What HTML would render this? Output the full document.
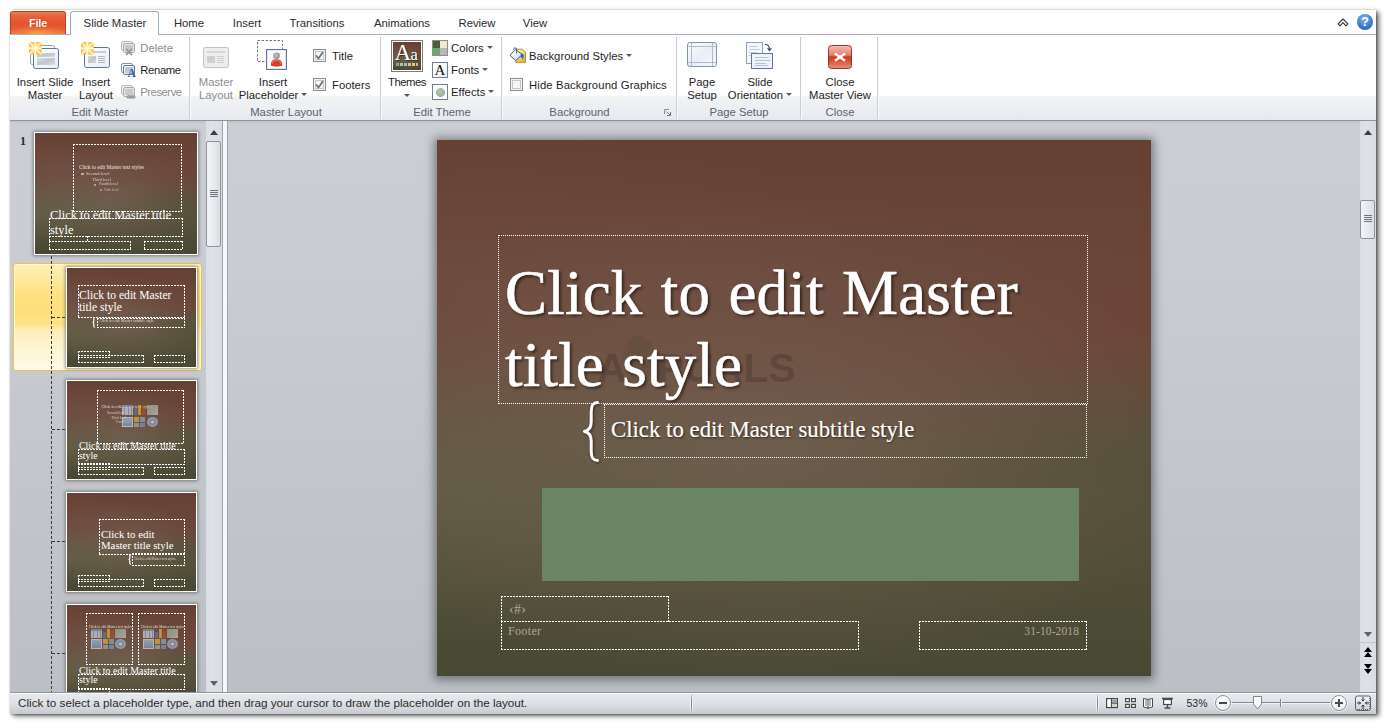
<!DOCTYPE html>
<html>
<head>
<meta charset="utf-8">
<title>PowerPoint Slide Master</title>
<style>
*{box-sizing:border-box;margin:0;padding:0}
html,body{width:1387px;height:725px;overflow:hidden;background:#fff}
body{font-family:"Liberation Sans",sans-serif;font-size:11.3px;color:#1e1e1e;position:relative}
.abs{position:absolute}
#app{position:absolute;left:10px;top:10px;width:1366px;height:704px;background:#fff;box-shadow:3px 2px 5px rgba(0,0,0,.58),1px 1px 2px rgba(0,0,0,.25),0 0 1px rgba(0,0,0,.18);overflow:hidden}
/* everything inside #app is positioned in page coords minus (10,10) via #o */
#o{position:absolute;left:-10px;top:-10px;width:1387px;height:725px}
/* tabs */
#tabrow{position:absolute;left:10px;top:10px;width:1366px;height:24px;background:#fff}
.tab{position:absolute;top:15px;height:16px;line-height:16px;font-size:11.3px;color:#2b2b2b;white-space:nowrap;text-align:center}
#filetab{position:absolute;left:10px;top:11px;width:56px;height:23px;border-radius:3px 3px 0 0;border:1px solid #c6411b;border-bottom:none;background:radial-gradient(ellipse 55% 38% at 50% 100%,rgba(248,170,50,.95) 0,rgba(245,140,60,.5) 55%,rgba(240,120,60,0) 100%),linear-gradient(#ef7a4c 0%,#e7633c 18%,#e4522d 55%,#e6603a 80%,#ee7a3c 100%);color:#fff;font-weight:bold;font-size:10.8px;letter-spacing:-.1px;text-align:center;line-height:22px;text-shadow:0 0 1px rgba(120,30,0,.6)}
#acttab{position:absolute;left:70px;top:11px;width:89px;height:24px;border:1px solid #a5acb5;border-bottom:none;border-radius:3px 3px 0 0;background:#fff;z-index:3}
/* ribbon */
#ribbon{position:absolute;left:10px;top:34px;width:1366px;height:87px;border-top:1px solid #a9b0ba;border-bottom:1px solid #8f949b;background:linear-gradient(#ffffff 0px,#ffffff 60px,#f1f2f4 62px,#eceef1 75px,#e6e8ec 85px)}
.gsep{position:absolute;top:37px;width:2px;height:82px;background:linear-gradient(90deg,#c9cdd3 0,#c9cdd3 1px,#fbfbfc 1px)}
.glabel{position:absolute;top:105px;height:14px;line-height:14px;font-size:11.3px;color:#5a6275;text-align:center;white-space:nowrap}
.rt{position:absolute;white-space:nowrap;line-height:13px;font-size:11.3px;color:#1e1e1e;text-align:center}
.dis{color:#8d8d8d}
.arr{display:inline-block;width:0;height:0;border-left:3px solid transparent;border-right:3px solid transparent;border-top:3px solid #5a5a5a;vertical-align:middle;margin-left:3px;position:relative;top:-2px}
.cb{position:absolute;width:13px;height:13px;border:1px solid #8e8f8f;background:#f4f4f4;box-shadow:inset 0 0 0 1px #f4f4f4,inset 0 0 0 2px #c3c7cc}
/* workspace */
#work{position:absolute;left:10px;top:121px;width:1366px;height:572px;background:linear-gradient(#bfc3c9 0,#cbcfd4 3px,#c9cdd2 150px,#c1c5ca 400px,#bcc0c5 572px)}
#status{position:absolute;left:10px;top:692px;width:1366px;height:22px;border-top:1px solid #8f959d;background:linear-gradient(#fafbfc 0,#fafbfc 1px,#e6e9ec 1px,#dde0e5 50%,#c7cbd1 100%)}
.ssep{position:absolute;top:694px;width:3px;height:19px;background:linear-gradient(90deg,rgba(255,255,255,.7) 0,rgba(255,255,255,.7) 1px,#7f858e 1px,#7f858e 2px,rgba(255,255,255,.7) 2px);-webkit-mask-image:linear-gradient(rgba(0,0,0,.2) 0,#000 30%,#000 70%,rgba(0,0,0,.2) 100%);mask-image:linear-gradient(rgba(0,0,0,.2) 0,#000 30%,#000 70%,rgba(0,0,0,.2) 100%)}

/* slide */
.slidebg{background:
 radial-gradient(ellipse 30% 20% at 100% 33%,rgba(118,62,48,.28) 0,rgba(118,62,48,0) 100%),
 radial-gradient(ellipse 34% 24% at 100% 60%,rgba(78,80,54,.42) 0,rgba(78,80,54,0) 100%),
 radial-gradient(ellipse 50% 30% at 0% 64%,rgba(112,108,86,.38) 0,rgba(112,108,86,0) 100%),
 radial-gradient(ellipse 55% 30% at 8% 28%,rgba(125,95,80,.22) 0,rgba(125,95,80,0) 100%),
 radial-gradient(ellipse 62% 46% at 46% 56%,rgba(128,110,96,.46) 0,rgba(122,104,88,.30) 45%,rgba(110,95,76,0) 100%),
 linear-gradient(to bottom,#664032 0%,#684335 10%,#69463a 24%,#69483b 40%,#654b3c 48%,#5e4f3c 56%,#59503b 66%,#534e38 78%,#4c4b35 90%,#494933 100%)}
#slide{position:absolute;left:437px;top:140px;width:714px;height:536px;box-shadow:0 1px 9px 3px rgba(62,67,77,.6);overflow:hidden}
.ph{position:absolute;border:1px dotted #fff}
.phd{position:absolute;background:
 repeating-linear-gradient(90deg,#fff 0,#fff 2px,transparent 2px,transparent 3px) left top/100% 1px no-repeat,
 repeating-linear-gradient(90deg,#fff 0,#fff 2px,transparent 2px,transparent 3px) left bottom/100% 1px no-repeat,
 repeating-linear-gradient(180deg,#fff 0,#fff 2px,transparent 2px,transparent 3px) left top/1px 100% no-repeat,
 repeating-linear-gradient(180deg,#fff 0,#fff 2px,transparent 2px,transparent 3px) right top/1px 100% no-repeat}
#title{position:absolute;left:69px;top:0;font-family:"Liberation Serif",serif;color:#fff;white-space:nowrap}
.ser{font-family:"Liberation Serif",serif;white-space:nowrap;position:absolute}
.sb{position:absolute;background:linear-gradient(90deg,#dbdfe5,#dde1e8 40%,#d9dde3)}
.sbth{position:absolute;border:1px solid #8d939b;border-radius:2px;background:linear-gradient(90deg,#f3f4f6 0,#e9ebee 45%,#dcdfe3 100%)}
.grip{position:absolute;height:1px;background:#6e747c}
.tri-u{position:absolute;width:0;height:0;border-left:4.5px solid transparent;border-right:4.5px solid transparent;border-bottom:5px solid #3c3f45;margin-left:-.5px;margin-top:-1px}
.tri-d{position:absolute;width:0;height:0;border-left:4.5px solid transparent;border-right:4.5px solid transparent;border-top:5px solid #3c3f45;margin-left:-.5px}

/* left panel */
.th{position:absolute;border:1px solid #fff;box-shadow:0 0 3px 1px rgba(60,65,75,.55);overflow:hidden}
.th .ser{color:#fff}
.tl{position:absolute;font-family:"Liberation Serif",serif;color:#fff;white-space:nowrap}
.tt{position:absolute;font-family:"Liberation Serif",serif;color:#f1e9e0;white-space:nowrap;line-height:1.2}
.tiny{position:absolute;height:2px;background:rgba(230,220,210,.55)}
.vdash{position:absolute;width:1px;background:repeating-linear-gradient(180deg,#3a3a3a 0,#3a3a3a 3px,transparent 3px,transparent 5px)}
.hdash{position:absolute;height:1px;background:repeating-linear-gradient(90deg,#3a3a3a 0,#3a3a3a 3px,transparent 3px,transparent 5px)}
</style>
</head>
<body>
<div id="app"><div id="o">

<!-- TAB ROW -->
<div id="tabrow"></div>
<div id="filetab">File</div>
<div id="acttab"></div>
<div class="tab" style="left:83px;width:64px;z-index:4">Slide Master</div>
<div class="tab" style="left:173px;width:32px">Home</div>
<div class="tab" style="left:231px;width:32px">Insert</div>
<div class="tab" style="left:287px;width:60px">Transitions</div>
<div class="tab" style="left:371px;width:62px">Animations</div>
<div class="tab" style="left:457px;width:40px">Review</div>
<div class="tab" style="left:521px;width:28px">View</div>

<!-- RIBBON -->
<div id="ribbon"></div>
<div class="gsep" style="left:189px"></div>
<div class="gsep" style="left:380px"></div>
<div class="gsep" style="left:501px"></div>
<div class="gsep" style="left:676px"></div>
<div class="gsep" style="left:800px"></div>
<div class="gsep" style="left:877px"></div>
<div class="glabel" style="left:10px;width:180px">Edit Master</div>
<div class="glabel" style="left:191px;width:190px">Master Layout</div>
<div class="glabel" style="left:382px;width:120px">Edit Theme</div>
<div class="glabel" style="left:503px;width:153px">Background</div>
<div class="glabel" style="left:678px;width:122px">Page Setup</div>
<div class="glabel" style="left:802px;width:76px">Close</div>

<!-- RIBBON CONTENT -->
<div id="rc">
<!-- Insert Slide Master icon -->
<svg class="abs" style="left:27px;top:41px" width="33" height="30" viewBox="0 0 33 30">
 <defs><linearGradient id="gs" x1="0" y1="0" x2="1" y2="1"><stop offset="0" stop-color="#fff"/><stop offset="1" stop-color="#e8edf5"/></linearGradient>
 <linearGradient id="gb" x1="0" y1="0" x2="1" y2="1"><stop offset="0" stop-color="#dcdfe4"/><stop offset=".5" stop-color="#c2c6cc"/><stop offset="1" stop-color="#d8dbe0"/></linearGradient></defs>
 <rect x="3.5" y="4.500" width="24" height="19" rx="2" fill="#fff" stroke="#8da0bd"/>
 <rect x="6.500" y="7.500" width="25" height="20" rx="2" fill="url(#gs)" stroke="#5e7699"/>
 <rect x="10" y="12" width="18" height="4" fill="url(#gb)"/>
 <rect x="10" y="17" width="18" height="7" fill="url(#gb)"/>
 <g transform="translate(2,1)"><defs><radialGradient id="gst" cx=".5" cy=".5" r=".72"><stop offset="0" stop-color="#fffbe0"/><stop offset=".35" stop-color="#fde57a"/><stop offset="1" stop-color="#f2a413"/></radialGradient></defs><rect x="0" y="0" width="12.500" height="12.500" fill="url(#gst)"/><path d="M6.250,6.250 L5.300,0 H7.200Z M6.250,6.250 L5.300,12.500 H7.200Z M6.250,6.250 L0,5.300 V7.200Z M6.250,6.250 L12.500,5.300 V7.200Z M6.250,6.250 L0,1.300 V0 H1.300Z M6.250,6.250 L12.500,1.300 V0 H11.200Z M6.250,6.250 L0,11.200 V12.500 H1.300Z M6.250,6.250 L12.500,11.200 V12.500 H11.200Z" fill="#fffdf0" opacity=".95"/><circle cx="6.250" cy="6.250" r="1.600" fill="#fffef6"/></g>
</svg>
<div class="rt" style="left:10px;width:70px;top:76px">Insert Slide<br>Master</div>
<!-- Insert Layout icon -->
<svg class="abs" style="left:79px;top:41px" width="33" height="30" viewBox="0 0 33 30">
 <rect x="5.500" y="6.500" width="25" height="20" rx="2" fill="url(#gs)" stroke="#5e7699"/>
 <rect x="9" y="10" width="18" height="2" fill="#c9cdd3"/>
 <rect x="9" y="15" width="8" height="7" fill="url(#gb)"/>
 <path d="M19,15.500h7M19,17.500h7M19,19.500h7M19,21.500h7" stroke="#b4b9c1" stroke-width="1"/>
 <g transform="translate(2,1)"><defs><radialGradient id="gst2" cx=".5" cy=".5" r=".72"><stop offset="0" stop-color="#fffbe0"/><stop offset=".35" stop-color="#fde57a"/><stop offset="1" stop-color="#f2a413"/></radialGradient></defs><rect x="0" y="0" width="12.500" height="12.500" fill="url(#gst2)"/><path d="M6.250,6.250 L5.300,0 H7.200Z M6.250,6.250 L5.300,12.500 H7.200Z M6.250,6.250 L0,5.300 V7.200Z M6.250,6.250 L12.500,5.300 V7.200Z M6.250,6.250 L0,1.300 V0 H1.300Z M6.250,6.250 L12.500,1.300 V0 H11.200Z M6.250,6.250 L0,11.200 V12.500 H1.300Z M6.250,6.250 L12.500,11.200 V12.500 H11.200Z" fill="#fffdf0" opacity=".95"/><circle cx="6.250" cy="6.250" r="1.600" fill="#fffef6"/></g>
</svg>
<div class="rt" style="left:76px;width:40px;top:76px">Insert<br>Layout</div>
<!-- small buttons -->
<svg class="abs" style="left:120px;top:40px" width="17" height="17" viewBox="0 0 17 17">
 <rect x="1.500" y="1.500" width="11" height="9" rx="1.500" fill="#f1f1f1" stroke="#b9b9b9"/><rect x="3.500" y="3.500" width="11" height="9" rx="1.500" fill="#e6e6e6" stroke="#a9a9a9"/><rect x="5" y="5" width="8" height="6" fill="#c9c9c9"/>
 <path d="M6,9 L12,15 M12,9 L6,15" stroke="#9a9a9a" stroke-width="1.800"/>
</svg>
<div class="rt dis" style="left:140.300px;top:42px;text-align:left">Delete</div>
<svg class="abs" style="left:120px;top:62px;overflow:visible" width="17" height="17" viewBox="0 0 17 17">
 <rect x="1.500" y="1.500" width="11" height="9" rx="1.500" fill="#fff" stroke="#7f93b2"/><rect x="3.500" y="3.500" width="11" height="9" rx="1.500" fill="#f2f5fa" stroke="#5e7699"/><rect x="5" y="5" width="8" height="6" fill="#c3c8d0"/>
 <text x="7.400" y="15.300" font-family="Liberation Serif" font-weight="bold" font-size="11.500" fill="#2b57a5">A</text>
</svg>
<div class="rt" style="left:140.300px;top:64px;text-align:left;letter-spacing:-.37px">Rename</div>
<svg class="abs" style="left:120px;top:84px" width="17" height="17" viewBox="0 0 17 17">
 <rect x="1.500" y="1.500" width="11" height="9" rx="1.500" fill="#f1f1f1" stroke="#b9b9b9"/><rect x="3.500" y="3.500" width="11" height="9" rx="1.500" fill="#e6e6e6" stroke="#a9a9a9"/><rect x="5" y="5" width="8" height="6" fill="#c9c9c9"/>
 <path d="M8,13 h6" stroke="#8f8f8f" stroke-width="3" stroke-linecap="round"/><circle cx="9" cy="12.500" r="1.700" fill="#a5a5a5"/><circle cx="13.500" cy="12.500" r="1.700" fill="#a5a5a5"/>
</svg>
<div class="rt dis" style="left:140.300px;top:86px;text-align:left;letter-spacing:-.49px">Preserve</div>

<!-- Master Layout (disabled) -->
<svg class="abs" style="left:202px;top:46px" width="29" height="24" viewBox="0 0 29 24">
 <rect x="1.500" y="1.500" width="25" height="20" rx="2" fill="#ededed" stroke="#c2c2c2"/>
 <rect x="5" y="5" width="18" height="2" fill="#d6d6d6"/><rect x="5" y="10" width="8" height="7" fill="#d0d0d0"/>
 <path d="M15,10.500h7M15,12.500h7M15,14.500h7M15,16.500h7" stroke="#cfcfcf"/>
</svg>
<div class="rt dis" style="left:191px;width:50px;top:76px">Master<br>Layout</div>
<!-- Insert Placeholder -->
<svg class="abs" style="left:256px;top:39px" width="33" height="33" viewBox="0 0 33 33">
 <rect x="1.500" y="1.500" width="25" height="21" fill="none" stroke="#777" stroke-dasharray="2.500 1.500"/>
 <rect x="10.500" y="10.500" width="20" height="20" fill="#fff" stroke="#5e7699"/>
 <rect x="11.500" y="11.500" width="18" height="18" fill="none" stroke="#dfe6f0"/>
 <path d="M14.800,26.500 C14.800,21.800 17,20.300 20.500,20.300 C24,20.300 26.200,21.800 26.200,26.500 C24,28 17,28 14.800,26.500 Z" fill="#d8402a"/>
 <path d="M16,25 C16.500,22.300 18,21.400 20.500,21.400 C23,21.400 24.500,22.300 25,25" fill="none" stroke="#f08a70" stroke-width=".8"/>
 <circle cx="20.500" cy="16.800" r="3.300" fill="#8f8f8f"/><circle cx="20.100" cy="16.400" r="2.300" fill="#b9b9b9"/>
</svg>
<div class="rt" style="left:236px;width:74px;top:76px">Insert<br>Placeholder<span class="arr"></span></div>
<div class="cb" style="left:313px;top:49px"></div>
<svg class="abs" style="left:313px;top:49px" width="13" height="13" viewBox="0 0 13 13"><path d="M3,6.500 L5.500,9.500 L10,3" fill="none" stroke="#686b72" stroke-width="1.600"/></svg>
<div class="rt" style="left:332px;top:50px;text-align:left">Title</div>
<div class="cb" style="left:313px;top:78px"></div>
<svg class="abs" style="left:313px;top:78px" width="13" height="13" viewBox="0 0 13 13"><path d="M3,6.500 L5.500,9.500 L10,3" fill="none" stroke="#686b72" stroke-width="1.600"/></svg>
<div class="rt" style="left:332px;top:79px;text-align:left">Footers</div>

<!-- Themes -->
<div class="abs" style="left:391px;top:40px;width:32px;height:32px;border:1px solid #7d7d7d;background:#fff;padding:1px"><div class="slidebg" style="width:28px;height:28px;position:relative;overflow:hidden">
 <div style="position:absolute;left:3px;top:0px;font:23px/22px 'Liberation Serif',serif;color:#fff;letter-spacing:-.6px;left:1.500px;top:0;text-shadow:1px 1px 1px rgba(0,0,0,.5)">A<span style="font-size:16.500px">a</span></div>
 <div style="position:absolute;left:3px;top:21px;width:22px;height:3px;background:linear-gradient(90deg,#7bb07a 0 3px,transparent 3px 4px,#b9b9b9 4px 7px,transparent 7px 8px,#9fb7d6 8px 11px,transparent 11px 12px,#d9b8a0 12px 15px,transparent 15px 16px,#e5c85e 16px 19px,transparent 19px 20px,#e9a5a0 20px 22px)"></div>
</div></div>
<div class="rt" style="left:384px;width:46px;top:76px;letter-spacing:-.45px">Themes</div>
<div class="arr" style="position:absolute;left:404px;top:94px;margin:0"></div>
<!-- Colors/Fonts/Effects -->
<div class="abs" style="left:432px;top:40px;width:16px;height:16px;border:1px solid #8c8c8c;background:linear-gradient(90deg,#4e5a3f 0 7px,#eeebcf 7px 14px) 0 0/14px 7px no-repeat,linear-gradient(90deg,#71a570 0 7px,#b7b7b7 7px 14px) 0 7px/14px 7px no-repeat"></div>
<div class="rt" style="left:451px;top:42px;text-align:left">Colors<span class="arr"></span></div>
<div class="abs" style="left:432px;top:62px;width:16px;height:16px;border:1px solid #6d7f9d;background:linear-gradient(135deg,#fff 40%,#e4eaf3);font:bold 15px/14px 'Liberation Serif',serif;color:#111;text-align:center;font-weight:normal">A</div>
<div class="rt" style="left:451px;top:64px;text-align:left">Fonts<span class="arr"></span></div>
<div class="abs" style="left:432px;top:84px;width:16px;height:16px;border:1px solid #6d7f9d;background:#fff"><div style="position:absolute;left:3.500px;top:3.500px;width:7px;height:7px;border-radius:50%;background:radial-gradient(circle at 45% 40%,#b5c6b5 0,#a3b8a5 50%,#7f9683 100%);box-shadow:0 0 0 .8px #75857a"></div></div>
<div class="rt" style="left:451px;top:86px;text-align:left">Effects<span class="arr"></span></div>

<!-- Background -->
<svg class="abs" style="left:509px;top:47px" width="18" height="17" viewBox="0 0 18 17">
 <defs><linearGradient id="gy" x1="0" y1="0" x2=".6" y2="1"><stop offset="0" stop-color="#fff6d6"/><stop offset=".55" stop-color="#f8d676"/><stop offset="1" stop-color="#eeb33a"/></linearGradient>
 <linearGradient id="gk" x1="0" y1="0" x2="1" y2="1"><stop offset="0" stop-color="#ffffff"/><stop offset=".6" stop-color="#e6edf8"/><stop offset="1" stop-color="#b9c9e4"/></linearGradient></defs>
 <path d="M6.900,2.200 H13.400 L16.500,5.300 V15.300 H6.900 Z" fill="url(#gy)" stroke="#b98a26" stroke-width="1"/>
 <path d="M1,8.300 L6.400,2.300 L13.200,7.600 L6.600,13.700 Z" fill="url(#gk)" stroke="#3d5fa8" stroke-width="1" stroke-linejoin="round"/>
 <path d="M12.600,6.600 C15.200,6.800 15.400,10 13.600,12.600 C13,11 11.300,9.600 11.600,7.800 Z" fill="#2b64cc"/>
 <path d="M4.700,2.600 C4.500,.3 7.600,.2 7.600,2.400 L7.600,6.300" fill="none" stroke="#4a5266" stroke-width="1"/>
</svg>
<div class="rt" style="left:529px;top:50px;text-align:left">Background Styles<span class="arr"></span></div>
<div class="cb" style="left:510px;top:78px"></div>
<div class="rt" style="left:529px;top:79px;text-align:left;letter-spacing:.12px">Hide Background Graphics</div>
<svg class="abs" style="left:663px;top:108px" width="9" height="9" viewBox="0 0 9 9"><path d="M1.500,6 V1.500 H6" fill="none" stroke="#8a9099"/><path d="M3.500,3.500 L7,7 M7.500,4 V7.500 H4" fill="none" stroke="#70767f"/></svg>

<!-- Page Setup -->
<svg class="abs" style="left:686px;top:41px" width="33" height="28" viewBox="0 0 33 28">
 <defs><linearGradient id="gp" x1="0" y1="0" x2="1" y2="1"><stop offset="0" stop-color="#fff"/><stop offset=".5" stop-color="#e9edf5"/><stop offset="1" stop-color="#f7f9fc"/></linearGradient></defs>
 <rect x="1.500" y="1.500" width="29" height="24" rx="2.500" fill="url(#gp)" stroke="#7f93b2"/>
 <path d="M5.500,2V25M26.500,2V25M2,5.500H30M2,21.500H30" stroke="#aebbd0"/>
</svg>
<div class="rt" style="left:682px;width:40px;top:76px">Page<br>Setup</div>
<!-- Slide Orientation -->
<svg class="abs" style="left:745px;top:41px" width="30" height="30" viewBox="0 0 30 30">
 <rect x="1.500" y="1.500" width="16" height="21" fill="#f4f7fc" stroke="#8ea0bd"/>
 <path d="M4,5.500h9M4,8.500h11M4,11.500h8M4,14.500h10" stroke="#c4cede"/>
 <rect x="6.500" y="12.500" width="21" height="15" fill="#eef3fb" stroke="#5e7699"/>
 <path d="M10,16.500h13M10,19.500h15M10,22.500h11M10,24.500h13" stroke="#b4c2d8"/>
 <path d="M20,3.500 C23,3.500 24.500,5.500 24.500,8.500 M22.500,7 L24.500,9.500 L26.500,7" fill="none" stroke="#39456b" stroke-width="1.200"/>
</svg>
<div class="rt" style="left:722px;width:76px;top:76px">Slide<br>Orientation<span class="arr"></span></div>
<!-- Close -->
<svg class="abs" style="left:827px;top:44px" width="26" height="26" viewBox="0 0 26 26">
 <defs><linearGradient id="gc" x1="0" y1="0" x2="0" y2="1"><stop offset="0" stop-color="#f5bdb1"/><stop offset=".42" stop-color="#e57f6d"/><stop offset=".5" stop-color="#cf3a22"/><stop offset=".62" stop-color="#d8472d"/><stop offset="1" stop-color="#ea917c"/></linearGradient></defs>
 <rect x="1.500" y="1.500" width="23" height="23" rx="3" fill="url(#gc)" stroke="#8e3a2c"/>
 <path d="M8,9.500 L18,16.800 M18,9.500 L8,16.800" stroke="#fff" stroke-width="2.500"/>
</svg>
<div class="rt" style="left:804px;width:72px;top:76px">Close<br>Master View</div>
<!-- top-right icons -->
<svg class="abs" style="left:1337px;top:17px" width="12" height="10" viewBox="0 0 12 10"><path d="M6,2 L10.900,6.900 L9,8.800 L6,5.700 L3,8.800 L1.100,6.900 Z" fill="#fff" stroke="#3a3a3a" stroke-width="1.150" stroke-linejoin="round"/></svg>
<div class="abs" style="left:1357px;top:14px;width:16px;height:16px;border-radius:50%;background:radial-gradient(circle at 45% 30%,#7fb0ee,#2e6fca 70%,#1f57a8);color:#fff;font:bold 13px/16px 'Liberation Sans',sans-serif;text-align:center">?</div>
</div>

<!-- WORKSPACE -->
<div id="work"></div>
<div id="ws">
<!-- LEFT PANEL -->
<div class="abs" style="left:20px;top:135px;font:bold 12px 'Liberation Serif',serif;line-height:13px;color:#1f2a44">1</div>
<!-- selection highlight -->
<div class="abs" style="left:13px;top:263px;width:189px;height:108px;border:1px solid #f0c243;border-radius:3px;background:linear-gradient(#fef0b6 0,#fee99c 14%,#fee183 28%,#fedf7c 45%,#fee387 57%,#fdefb9 63%,#fef5d3 80%,#fffae8 100%);box-shadow:inset 0 0 0 1px rgba(255,250,225,.8)"></div>
<!-- tree lines -->
<div class="vdash" style="left:51px;top:256px;height:436px"></div>
<div class="hdash" style="left:52px;top:317px;width:13px"></div>
<div class="hdash" style="left:52px;top:429px;width:13px"></div>
<div class="hdash" style="left:52px;top:541px;width:13px"></div>
<div class="hdash" style="left:52px;top:653px;width:13px"></div>

<!-- thumb 1 master : inner origin (35,133) -->
<div class="th slidebg" style="left:34px;top:132px;width:164px;height:123px">
  <div class="phd" style="left:38px;top:11px;width:109px;height:68px"></div>
  <div class="tt" style="left:44px;top:31px;font-size:5.3px">Click to edit Master text styles</div>
  <div class="tt" style="left:51px;top:38px;font-size:4.6px;opacity:.85">Second level</div>
  <div class="tt" style="left:57.5px;top:44px;font-size:4.2px;opacity:.8">Third level</div>
  <div class="tt" style="left:64px;top:49px;font-size:3.9px;opacity:.8">Fourth level</div>
  <div class="tt" style="left:69px;top:55px;font-size:3.5px;opacity:.6">Fifth level</div>
  <div class="abs" style="left:46px;top:39.500px;width:2.500px;height:2.500px;background:rgba(230,215,190,.7)"></div>
  <div class="abs" style="left:59px;top:50.500px;width:2px;height:2px;background:rgba(220,210,200,.6)"></div>
  <div class="abs" style="left:64.500px;top:56px;width:2px;height:2px;background:rgba(220,210,200,.5)"></div>
  <div class="tl" style="left:15px;top:75px;font-size:12.4px;line-height:14.5px">Click to edit Master title<br>style</div>
  <div class="phd" style="left:14px;top:85px;width:134px;height:19px"></div>
  <div class="phd" style="left:14px;top:103px;width:39px;height:6px"></div>
  <div class="phd" style="left:14px;top:108px;width:82px;height:9px"></div>
  <div class="phd" style="left:109px;top:108px;width:39px;height:9px"></div>
</div>

<!-- thumb 2 title layout: inner origin (66,268) -->
<div class="th slidebg" style="left:66px;top:267px;width:131px;height:101px">
  <div class="phd" style="left:11px;top:17px;width:107px;height:33px"></div>
  <div class="tl" style="left:12px;top:22px;font-size:11.6px;line-height:12.4px">Click to edit Master<br>title style</div>
  <div class="phd" style="left:30px;top:50px;width:88px;height:10px"></div>
  <div class="tl" style="left:25px;top:47px;font-size:13px;font-weight:bold;line-height:14px;transform:scaleX(.7);transform-origin:0 0">{</div>
  <div class="tt" style="left:32.5px;top:51px;font-size:4.1px;opacity:.85">Click to edit Master subtitle style</div>
  <div class="phd" style="left:11px;top:83px;width:32px;height:7px"></div>
<div class="phd" style="left:11px;top:87px;width:66px;height:8px"></div>
<div class="phd" style="left:87px;top:87px;width:31px;height:8px"></div>
</div>

<!-- thumb 3 title+content: inner origin (67,381) -->
<div class="th slidebg" style="left:66px;top:380px;width:131px;height:100px">
  <div class="phd" style="left:30px;top:9px;width:87px;height:54px"></div>
  <div class="tt" style="left:34.500px;top:24px;font-size:4.1px;opacity:.9">Click to edit Master text styles</div>
  <div class="tt" style="left:40px;top:30px;font-size:3.6px;opacity:.8">Second level</div>
  <div class="tt" style="left:44.500px;top:35.500px;font-size:3.3px;opacity:.75">Third level</div>
  <div class="tt" style="left:49px;top:39.500px;font-size:3.1px;opacity:.7">Fourth level</div>
  <div class="tt" style="left:53.500px;top:43.500px;font-size:2.9px;opacity:.6">Fifth level</div>
  <div class="abs" style="left:55px;top:23.6px;opacity:0.78"><div class="abs" style="left:0;top:0;width:11px;height:10.5px;background:linear-gradient(#7f8ea6 0,#7f8ea6 2px,transparent 2px),repeating-linear-gradient(90deg,#c3cad6 0,#c3cad6 2.5px,#8a96aa 2.5px,#8a96aa 3.5px)"></div><div class="abs" style="left:12.3px;top:0;width:11px;height:10.5px;background:linear-gradient(90deg,#4f78b8 0,#4f78b8 3px,transparent 3px,transparent 4px,#d8a52f 4px,#d8a52f 7px,transparent 7px,transparent 8px,#b9472c 8px,#b9472c 11px) bottom/100% 100% no-repeat;clip-path:polygon(0 35%,27% 35%,27% 0,64% 0,64% 20%,100% 20%,100% 100%,0 100%)"></div><div class="abs" style="left:24.6px;top:0;width:11px;height:10.5px;background:linear-gradient(135deg,#8fae7d,#a9b0a6 60%,#c0c3c0)"></div><div class="abs" style="left:0;top:12px;width:11px;height:10.5px;background:linear-gradient(#9fb4d0,#7f93ae);border:.5px solid #c9d0da"></div><div class="abs" style="left:12.3px;top:12px;width:11px;height:10.5px;background:linear-gradient(90deg,#d3a63e 0,#d3a63e 5px,transparent 5px,transparent 6px,#8d9cb3 6px) 0 0/100% 5px no-repeat,linear-gradient(90deg,#9aa3ad 0,#9aa3ad 5px,transparent 5px,transparent 6px,#6d93c6 6px) 0 6px/100% 5px no-repeat"></div><div class="abs" style="left:24.6px;top:12px;width:11px;height:10.5px;border-radius:50%;background:radial-gradient(circle,#d5dbe3 0,#d5dbe3 18%,#7d8fa8 22%,#9fb0c6 60%,#6f819b 100%)"></div></div>
  <div class="tl" style="left:12px;top:60.300px;font-size:9.9px;line-height:9.9px">Click to edit Master title<br>style</div>
  <div class="phd" style="left:11px;top:68px;width:107px;height:16px"></div>
  <div class="phd" style="left:11px;top:82px;width:32px;height:7px"></div>
  <div class="phd" style="left:11px;top:86px;width:66px;height:8px"></div>
  <div class="phd" style="left:87px;top:86px;width:31px;height:8px"></div>
</div>

<!-- thumb 4 section header: inner origin (66,493) -->
<div class="th slidebg" style="left:66px;top:492px;width:131px;height:100px">
  <div class="phd" style="left:32px;top:26px;width:86px;height:36px"></div>
  <div class="tl" style="left:34px;top:36px;font-size:10.8px;line-height:11.2px">Click to edit<br>Master title style</div>
  <div class="phd" style="left:65px;top:59.500px;width:53px;height:13px"></div>
  <div class="tl" style="left:60.500px;top:58.500px;font-size:13px;font-weight:bold;line-height:14px;transform:scaleX(.7);transform-origin:0 0">{</div>
  <div class="tt" style="left:67px;top:64px;font-size:3.4px;opacity:.8">Click to edit Master text styles</div>
  <div class="phd" style="left:11px;top:82px;width:32px;height:7px"></div>
<div class="phd" style="left:11px;top:86px;width:66px;height:8px"></div>
<div class="phd" style="left:87px;top:86px;width:31px;height:8px"></div>
</div>

<!-- thumb 5 two content: inner origin (67,605) -->
<div class="th slidebg" style="left:66px;top:604px;width:131px;height:100px">
  <div class="phd" style="left:19px;top:8px;width:47px;height:52px"></div>
  <div class="phd" style="left:71px;top:8px;width:47px;height:52px"></div>
  <div class="tt" style="left:22px;top:19.500px;font-size:3.5px;opacity:.9">Click to edit Master text styles</div>
  <div class="tt" style="left:74px;top:19.500px;font-size:3.5px;opacity:.9">Click to edit Master text styles</div>
  <div class="abs" style="left:24px;top:23.6px;opacity:0.78"><div class="abs" style="left:0;top:0;width:10.8px;height:9.5px;background:linear-gradient(#7f8ea6 0,#7f8ea6 2px,transparent 2px),repeating-linear-gradient(90deg,#c3cad6 0,#c3cad6 2.5px,#8a96aa 2.5px,#8a96aa 3.5px)"></div><div class="abs" style="left:12.1px;top:0;width:10.8px;height:9.5px;background:linear-gradient(90deg,#4f78b8 0,#4f78b8 3px,transparent 3px,transparent 4px,#d8a52f 4px,#d8a52f 7px,transparent 7px,transparent 8px,#b9472c 8px,#b9472c 11px) bottom/100% 100% no-repeat;clip-path:polygon(0 35%,27% 35%,27% 0,64% 0,64% 20%,100% 20%,100% 100%,0 100%)"></div><div class="abs" style="left:24.2px;top:0;width:10.8px;height:9.5px;background:linear-gradient(135deg,#8fae7d,#a9b0a6 60%,#c0c3c0)"></div><div class="abs" style="left:0;top:10.9px;width:10.8px;height:9.5px;background:linear-gradient(#9fb4d0,#7f93ae);border:.5px solid #c9d0da"></div><div class="abs" style="left:12.1px;top:10.9px;width:10.8px;height:9.5px;background:linear-gradient(90deg,#d3a63e 0,#d3a63e 5px,transparent 5px,transparent 6px,#8d9cb3 6px) 0 0/100% 5px no-repeat,linear-gradient(90deg,#9aa3ad 0,#9aa3ad 5px,transparent 5px,transparent 6px,#6d93c6 6px) 0 6px/100% 5px no-repeat"></div><div class="abs" style="left:24.2px;top:10.9px;width:10.8px;height:9.5px;border-radius:50%;background:radial-gradient(circle,#d5dbe3 0,#d5dbe3 18%,#7d8fa8 22%,#9fb0c6 60%,#6f819b 100%)"></div></div>
  <div class="abs" style="left:76px;top:23.6px;opacity:0.78"><div class="abs" style="left:0;top:0;width:10.8px;height:9.5px;background:linear-gradient(#7f8ea6 0,#7f8ea6 2px,transparent 2px),repeating-linear-gradient(90deg,#c3cad6 0,#c3cad6 2.5px,#8a96aa 2.5px,#8a96aa 3.5px)"></div><div class="abs" style="left:12.1px;top:0;width:10.8px;height:9.5px;background:linear-gradient(90deg,#4f78b8 0,#4f78b8 3px,transparent 3px,transparent 4px,#d8a52f 4px,#d8a52f 7px,transparent 7px,transparent 8px,#b9472c 8px,#b9472c 11px) bottom/100% 100% no-repeat;clip-path:polygon(0 35%,27% 35%,27% 0,64% 0,64% 20%,100% 20%,100% 100%,0 100%)"></div><div class="abs" style="left:24.2px;top:0;width:10.8px;height:9.5px;background:linear-gradient(135deg,#8fae7d,#a9b0a6 60%,#c0c3c0)"></div><div class="abs" style="left:0;top:10.9px;width:10.8px;height:9.5px;background:linear-gradient(#9fb4d0,#7f93ae);border:.5px solid #c9d0da"></div><div class="abs" style="left:12.1px;top:10.9px;width:10.8px;height:9.5px;background:linear-gradient(90deg,#d3a63e 0,#d3a63e 5px,transparent 5px,transparent 6px,#8d9cb3 6px) 0 0/100% 5px no-repeat,linear-gradient(90deg,#9aa3ad 0,#9aa3ad 5px,transparent 5px,transparent 6px,#6d93c6 6px) 0 6px/100% 5px no-repeat"></div><div class="abs" style="left:24.2px;top:10.9px;width:10.8px;height:9.5px;border-radius:50%;background:radial-gradient(circle,#d5dbe3 0,#d5dbe3 18%,#7d8fa8 22%,#9fb0c6 60%,#6f819b 100%)"></div></div>
  <div class="tl" style="left:12px;top:60.500px;font-size:9.9px;line-height:9.9px">Click to edit Master title<br>style</div>
  <div class="phd" style="left:11px;top:68.500px;width:107px;height:16px"></div>
  <div class="phd" style="left:11px;top:83px;width:32px;height:6px"></div>
</div>

<!-- left scrollbar -->
<div class="sb" style="left:206px;top:121px;width:16px;height:571px"></div>
<div class="tri-u" style="left:210px;top:131px"></div>
<div class="sbth" style="left:206px;top:141px;width:15px;height:106px"></div>
<div class="grip" style="left:210px;top:190px;width:8px"></div>
<div class="grip" style="left:210px;top:192px;width:8px"></div>
<div class="grip" style="left:210px;top:194px;width:8px"></div>
<div class="grip" style="left:210px;top:196px;width:8px"></div>
<div class="tri-d" style="left:210px;top:681px;border-top-color:#5d6168"></div>
<!-- splitter -->
<div class="abs" style="left:222px;top:121px;width:6px;height:571px;background:linear-gradient(90deg,#9da2a9 0,#9da2a9 1px,#f7f8f9 1px,#f7f8f9 5px,#9fa5ac 5px,#9fa5ac 6px)"></div>
<!-- main slide -->
<div id="slide" class="slidebg">
  <div class="abs" style="left:160px;top:208px;font-size:41px;line-height:41px;font-weight:bold;color:rgba(72,52,44,.42);white-space:nowrap">A<span style="display:inline-block;width:30px"></span>PUALS</div>
  <div class="abs" style="left:185px;top:196px;width:34px;height:44px;border-radius:50% 50% 45% 45%;background:radial-gradient(ellipse at 50% 35%,rgba(85,75,55,.45),rgba(85,70,55,.25) 60%,rgba(85,70,55,0) 100%)"></div>
  <div class="ph" style="left:61px;top:95px;width:590px;height:169px"></div>
  <div class="ser" style="left:68px;top:117px;font-size:63px;line-height:72px;word-spacing:2.3px;letter-spacing:.2px;color:#fff;-webkit-text-stroke:.55px #fff;text-shadow:2px 2px 3px rgba(30,20,15,.75)">Click to edit Master<br>title style</div>
  <div class="ph" style="left:167px;top:264px;width:483px;height:54px"></div>
  <svg class="abs" style="left:143px;top:259px;filter:drop-shadow(1px 1px 1.5px rgba(30,20,15,.7))" width="22" height="64" viewBox="0 0 22 64"><path d="M17.5,3.5 C12.5,3.7 11.2,7 11.2,13 L11.2,23 C11.2,29 8.5,31.6 4.5,32.5 C8.5,33.4 11.2,36 11.2,42 L11.2,52 C11.2,58 12.5,61.3 17.5,61.5" fill="none" stroke="#fff" stroke-width="3" stroke-linecap="round" stroke-linejoin="round"/></svg>
  <div class="ser" style="left:174px;top:277px;font-size:22.8px;line-height:26px;color:#fff;-webkit-text-stroke:.2px #fff;text-shadow:1px 1px 2px rgba(30,20,15,.75)">Click to edit Master subtitle style</div>
  <div class="abs" style="left:105px;top:348px;width:537px;height:93px;background:#6a8562"></div>
  <div class="phd" style="left:64px;top:456px;width:168px;height:26px"></div>
  <div class="phd" style="left:64px;top:481px;width:358px;height:29px"></div>
  <div class="phd" style="left:482px;top:481px;width:168px;height:29px"></div>
  <div class="ser" style="left:72px;top:462px;font-size:14px;line-height:16px;letter-spacing:.3px;color:#b3aa99">&#8249;#&#8250;</div>
  <div class="ser" style="left:71px;top:484px;font-size:12px;line-height:14px;color:#aea594;letter-spacing:.35px">Footer</div>
  <div class="ser" style="left:540px;width:102px;text-align:right;top:484px;font-size:11.5px;line-height:14px;color:#aea594;letter-spacing:.1px">31-10-2018</div>
</div>
<!-- right scrollbar -->
<div class="sb" style="left:1360px;top:121px;width:16px;height:571px"></div>
<div class="tri-u" style="left:1364px;top:131px"></div>
<div class="sbth" style="left:1360px;top:200px;width:15px;height:39px"></div>
<div class="grip" style="left:1364px;top:215px;width:8px"></div>
<div class="grip" style="left:1364px;top:217px;width:8px"></div>
<div class="grip" style="left:1364px;top:219px;width:8px"></div>
<div class="grip" style="left:1364px;top:221px;width:8px"></div>
<div class="tri-d" style="left:1364px;top:632px;border-top-color:#5d6168"></div>
<div class="abs" style="left:1360px;top:642px;width:16px;height:1px;background:#c3c7cc"></div>
<div class="tri-u" style="left:1364px;top:648px;border-bottom-color:#000"></div>
<div class="tri-u" style="left:1364px;top:653px;border-bottom-color:#000"></div>
<div class="tri-d" style="left:1364px;top:664px;border-top-color:#000"></div>
<div class="tri-d" style="left:1364px;top:669px;border-top-color:#000"></div>
</div>

<!-- STATUS -->
<div id="status"></div>
<div id="st">
<div class="abs" style="left:18px;top:696px;font-size:11.7px;line-height:14px;color:#2a2a2a;white-space:nowrap">Click to select a placeholder type, and then drag your cursor to draw the placeholder on the layout.</div>
<div class="ssep" style="left:690px"></div>
<div class="ssep" style="left:1096px"></div>
<!-- view icons -->
<svg class="abs" style="left:1105px;top:697px" width="70" height="13" viewBox="0 0 70 13">
 <g fill="none" stroke="#4a4a4a" stroke-width="1.200">
 <rect x="1.600" y="1.600" width="10.800" height="9" fill="#fff"/>
 <path d="M6.500,1.600V10.600 M6.500,6.200H12.400"/>
 <rect x="7.200" y="2.500" width="4.500" height="3" fill="#9a9a9a" stroke="none"/>
 <rect x="7.200" y="7" width="4.500" height="3" fill="#d0d0d0" stroke="none"/>
 <rect x="20.600" y="1.600" width="3.800" height="3" fill="#fff"/><rect x="26.600" y="1.600" width="3.800" height="3" fill="#fff"/>
 <rect x="20.600" y="7.400" width="3.800" height="3" fill="#fff"/><rect x="26.600" y="7.400" width="3.800" height="3" fill="#fff"/>
 <path d="M38.500,1.500 L43,2.500 L47.500,1.500 V10 L43,11 L38.500,10 Z M43,2.500V12" fill="#fff" stroke-width="1"/>
 <path d="M40,4h2M40,6h2M40,8h2M44,4h2M44,6h2M44,8h2" stroke-width=".8"/>
 <path d="M57,1.500H68" stroke-width="1.600"/><rect x="58.600" y="2.500" width="7.800" height="5" fill="#fff"/>
 <path d="M62.500,7.500V10.500 M59.500,11H65.500" stroke-width="1.400"/>
 </g>
</svg>
<div class="abs" style="left:1186.500px;top:696px;font-size:10.500px;line-height:14px;color:#2a2a2a">53%</div>
<!-- zoom slider -->
<div class="abs" style="left:1230px;top:702px;width:102px;height:2px;background:linear-gradient(#7f8691 0,#7f8691 1px,#f3f4f6 1px)"></div>
<div class="abs" style="left:1280px;top:699px;width:2px;height:8px;background:linear-gradient(90deg,#7f8691 0,#7f8691 1px,#f3f4f6 1px)"></div>
<div class="abs" style="left:1215px;top:695px;width:16px;height:16px;border-radius:50%;border:1px solid #8c929c;background:linear-gradient(#fff,#eceef1);box-shadow:0 0 0 1px rgba(255,255,255,.6)"><div style="position:absolute;left:3px;top:6px;width:8px;height:2px;background:#4a4a4a"></div></div>
<div class="abs" style="left:1331px;top:695px;width:16px;height:16px;border-radius:50%;border:1px solid #8c929c;background:linear-gradient(#fff,#eceef1);box-shadow:0 0 0 1px rgba(255,255,255,.6)"><div style="position:absolute;left:3px;top:6px;width:8px;height:2px;background:#4a4a4a"></div><div style="position:absolute;left:6px;top:3px;width:2px;height:8px;background:#4a4a4a"></div></div>
<svg class="abs" style="left:1252px;top:695px" width="11" height="15" viewBox="0 0 11 15"><path d="M1.500,1.500 H9.500 V9 L5.500,13.800 L1.500,9 Z" fill="#fbfbfc" stroke="#80868f"/></svg>
<!-- fit button -->
<svg class="abs" style="left:1354px;top:695px" width="18" height="17" viewBox="0 0 18 17">
 <defs><linearGradient id="gf" x1="0" y1="0" x2="0" y2="1"><stop offset="0" stop-color="#f4f5f7"/><stop offset="1" stop-color="#c9cdd3"/></linearGradient></defs>
 <rect x="1.500" y="1" width="15" height="14.500" rx="2" fill="url(#gf)" stroke="#596270"/>
 <path d="M9,2V6 M7.500,4.500L9,6L10.500,4.500 M9,14V10 M7.500,11.500L9,10L10.500,11.500 M3,8H6.500 M5,6.500L6.500,8L5,9.500 M15,8H11.500 M13,6.500L11.500,8L13,9.500" fill="none" stroke="#333" stroke-width="1"/>
 <path d="M3,14.500H15" stroke="#555" stroke-dasharray="1 1"/><path d="M15.500,3V14" stroke="#777" stroke-dasharray="1 1"/>
</svg>
</div>
</div></div>
</body>
</html>
